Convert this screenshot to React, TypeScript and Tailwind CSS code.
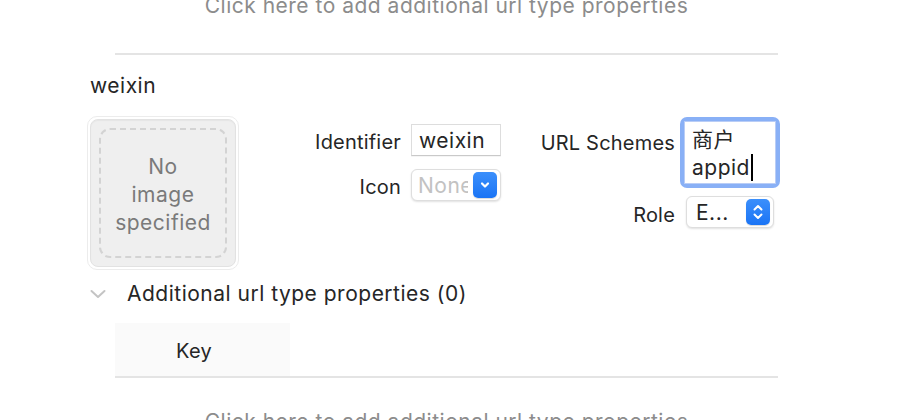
const font = { fontFamily: 'Inter, "Noto Sans CJK SC", sans-serif' }

function StepperButton({ double = false }: { double?: boolean }) {
  return (
    <div className="flex h-[26px] w-[24px] shrink-0 items-center justify-center rounded-[5px] bg-gradient-to-b from-[#3b8ffb] to-[#1a74f5] shadow-[0_1px_1px_rgba(0,0,0,0.15)]">
      {double ? (
        <svg width="12" height="18" viewBox="0 0 12 18" fill="none" stroke="white" strokeWidth="2" strokeLinecap="round" strokeLinejoin="round">
          <path d="M2.5 6.5 6 3l3.5 3.5" />
          <path d="M2.5 11.5 6 15l3.5-3.5" />
        </svg>
      ) : (
        <svg width="12" height="10" viewBox="0 0 12 10" fill="none" stroke="white" strokeWidth="2.2" strokeLinecap="round" strokeLinejoin="round">
          <path d="M3 3.5 6 6.5l3-3" />
        </svg>
      )}
    </div>
  )
}

export default function App() {
  return (
    <div className="relative h-[420px] w-[910px] overflow-hidden bg-white text-[21px] tracking-[0.5px] text-[#262626]" style={font}>
      {/* top hint (previous entry) */}
      <div className="-mt-[6px] ml-[115px] h-[59px] w-[663px] text-center leading-[24px] text-[#8c8c8c]">
        Click here to add additional url type properties
      </div>
      <div className="ml-[115px] h-[2px] w-[663px] bg-[#e4e4e4]" />

      {/* entry title */}
      <div className="ml-[90px] mt-[19px] leading-[24px]">weixin</div>

      {/* main row */}
      <div className="mt-[18px] flex items-start">
        {/* image well */}
        <div className="ml-[87px] h-[154px] w-[152px] shrink-0 rounded-[10px] border border-[#ececec] bg-white p-[2px]">
          <div className="flex h-full w-full rounded-[8px] border border-[#e2e2e2] bg-[#efefef] p-[8px] shadow-[inset_0_1px_1px_rgba(0,0,0,0.04)]">
            <div className="flex flex-1 items-center justify-center rounded-[11px] border-2 border-dashed border-[#d3d3d3] pt-[4px] text-center leading-[28px] text-[#7a7a7a]">
              No
              <br />
              image
              <br />
              specified
            </div>
          </div>
        </div>

        {/* identifier / icon */}
        <div className="mt-[7px] grid grid-cols-[162px_90px] items-center gap-x-[10px] gap-y-[12px]">
          <div className="pt-[5px] text-right text-[20px] leading-[28px] tracking-[0.2px]">Identifier</div>
          <div className="flex h-[32px] items-center border border-[#dddddd] border-b-[#c9c9c9] bg-white pl-[7px] pt-[2px] shadow-[0_1px_0_rgba(0,0,0,0.04)]">
            weixin
          </div>
          <div className="pt-[5px] text-right text-[20px] leading-[28px] tracking-[0.2px]">Icon</div>
          <div className="flex h-[32px] items-center overflow-hidden rounded-[6px] border border-[#dedede] bg-white pl-[6px] pr-[3px] shadow-[0_1px_2px_rgba(0,0,0,0.12)]">
            <span className="mr-[5px] w-[50px] shrink-0 overflow-hidden whitespace-nowrap pt-[2px] text-[#c2c2c2]">None</span>
            <StepperButton />
          </div>
        </div>

        {/* url schemes / role */}
        <div className="mt-[1px] grid grid-cols-[174px_auto] gap-x-[5px] gap-y-[8px]">
          <div className="pt-[12px] text-right text-[20px] leading-[28px] tracking-[0.2px]">URL Schemes</div>
          <div className="h-[71px] w-[100px] rounded-[7px] bg-[#89b0f6] p-[4px]">
            <div className="h-full w-full whitespace-nowrap border border-[#b9cdf6] bg-white pl-[7px] pt-[4px] leading-[28px]">
              商户
              <br />
              appid<span className="ml-[1px] inline-block h-[27px] w-[2px] bg-black align-[-6px]" />
            </div>
          </div>
          <div className="flex items-center justify-end pt-[5px] text-[20px] leading-[28px] tracking-[0.2px]">Role</div>
          <div className="ml-[6px] flex h-[32px] w-[88px] items-center justify-between rounded-[6px] border border-[#dedede] bg-white pl-[9px] pr-[3px] shadow-[0_1px_2px_rgba(0,0,0,0.12)]">
            <span className="pt-[2px]">E...</span>
            <StepperButton double />
          </div>
        </div>
      </div>

      {/* additional properties disclosure */}
      <div className="ml-[90px] mt-[10px] flex items-center leading-[28px]">
        <svg width="16" height="10" viewBox="0 0 16 10" fill="none" stroke="#c4c4c4" strokeWidth="2" strokeLinecap="round" strokeLinejoin="round">
          <path d="M1.5 2 8 8l6.5-6" />
        </svg>
        <span className="ml-[21px]">Additional url type properties (0)</span>
      </div>

      {/* table header */}
      <div className="ml-[115px] mt-[15px] flex h-[53px] w-[663px]">
        <div className="flex w-[175px] items-center bg-[#fafafa] pl-[61px] pt-[3px] text-[20px] tracking-[0.3px]">Key</div>
      </div>
      <div className="ml-[115px] h-[2px] w-[663px] bg-[#e4e4e4]" />

      <div className="ml-[115px] mt-[32px] w-[663px] text-center leading-[24px] text-[#8c8c8c]">
        Click here to add additional url type properties
      </div>
    </div>
  )
}
